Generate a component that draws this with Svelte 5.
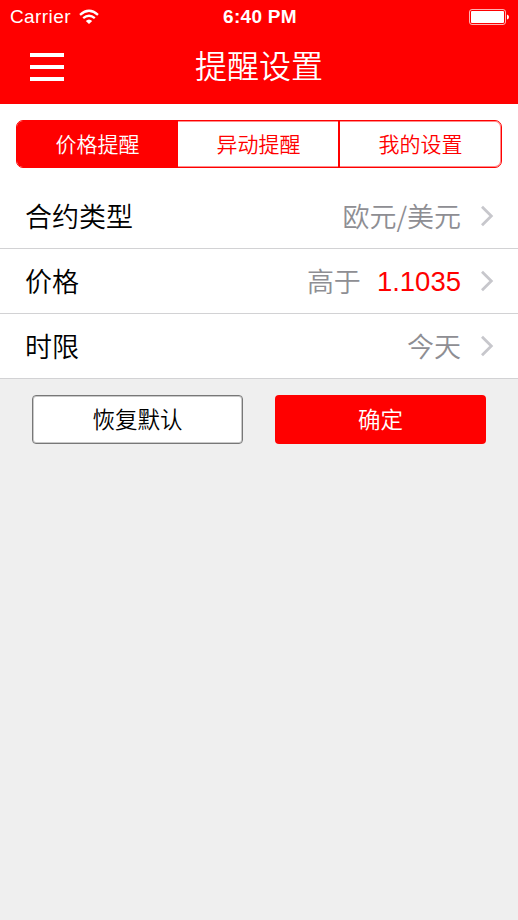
<script>
  const tabs = ['价格提醒', '异动提醒', '我的设置'];
  let active = $state(0);
  const rows = [
    { label: '合约类型', value: '欧元/美元' },
    { label: '价格', value: '高于', price: '1.1035' },
    { label: '时限', value: '今天' }
  ];
</script>

<div class="screen">
  <header>
    <div class="status">
      <div class="carrier">
        <span>Carrier</span>
        <svg width="20" height="16" viewBox="0 0 20 16" fill="none" stroke="#fff" stroke-width="2.3">
          <path d="M1 5.8Q10 -2.2 19 5.8" />
          <path d="M4.2 9.2Q10 4.2 15.8 9.2" />
          <path d="M6.8 12Q10 9 13.2 12L10 15Z" fill="#fff" stroke="none" />
        </svg>
      </div>
      <div class="time">6:40 PM</div>
      <div class="power">
        <svg width="41" height="16" viewBox="0 0 41 16">
          <rect x=".5" y=".5" width="36" height="15" rx="2.5" fill="none" stroke="#fff" stroke-opacity=".7" />
          <rect x="2" y="2" width="33" height="12" rx="1" fill="#fff" />
          <path d="M38 5.5Q40 6 40 8T38 10.5Z" fill="#fff" />
        </svg>
      </div>
    </div>
    <nav>
      <button class="menu" aria-label="菜单"><i></i><i></i><i></i></button>
      <h1>提醒设置</h1>
      <div></div>
    </nav>
  </header>

  <section class="content">
    <div class="tabs">
      {#each tabs as tab, i}
        <button class:active={active === i} onclick={() => (active = i)}>{tab}</button>
      {/each}
    </div>
    {#each rows as row}
      <div class="row">
        <span class="label">{row.label}</span>
        <span class="value">{row.value}</span>
        {#if row.price}<span class="price">{row.price}</span>{/if}
        <svg width="14" height="22" viewBox="0 0 14 22" fill="none" stroke="#c7c7cc" stroke-width="2.8">
          <path d="M2 1.7L11.3 11L2 20.3" />
        </svg>
      </div>
    {/each}
  </section>

  <div class="actions">
    <button class="reset">恢复默认</button>
    <button class="confirm">确定</button>
  </div>
</div>

<style>
  :global(body) {
    margin: 0;
  }
  .screen {
    width: 518px;
    height: 920px;
    overflow: hidden;
    background: #efefef;
    font-family: 'Liberation Sans', 'Noto Sans CJK SC', sans-serif;
    font-weight: 350;
  }
  button {
    margin: 0;
    padding: 0;
    border: 0;
    background: none;
    font: inherit;
    box-sizing: border-box;
  }
  header {
    height: 104px;
    background: #f00;
    color: #fff;
  }
  .status {
    height: 33px;
    padding: 0 8px 0 10px;
    display: grid;
    grid-template-columns: 1fr auto 1fr;
    align-items: center;
  }
  .carrier {
    display: flex;
    align-items: center;
    gap: 8px;
    font-size: 19px;
    letter-spacing: 0.4px;
  }
  .time {
    font-size: 19px;
    font-weight: 700;
    letter-spacing: 0.3px;
  }
  .power {
    display: flex;
    justify-content: flex-end;
  }
  nav {
    height: 67px;
    padding: 0 30px;
    display: grid;
    grid-template-columns: 1fr auto 1fr;
    align-items: center;
  }
  .menu {
    width: 34px;
    display: flex;
    flex-direction: column;
    gap: 8px;
  }
  .menu i {
    height: 4px;
    background: #fff;
  }
  h1 {
    margin: 0;
    font-size: 32px;
    line-height: 40px;
    font-weight: 350;
  }
  .content {
    background: #fff;
    padding-top: 16px;
  }
  .tabs {
    display: flex;
    height: 48px;
    margin: 0 16px 16px;
    box-sizing: border-box;
    border: 1px solid #f00;
    box-shadow: inset 0 0 0 1px rgba(255, 0, 0, 0.45);
    border-radius: 7px;
    overflow: hidden;
  }
  .tabs button {
    flex: 1;
    color: #f00;
    font-size: 21px;
    padding-bottom: 2px;
  }
  .tabs button:last-child {
    border-left: 2px solid #f00;
    margin-left: -1px;
  }
  .tabs button.active {
    background: #f00;
    color: #fff;
  }
  .row {
    height: 65px;
    box-sizing: border-box;
    border-bottom: 1px solid #d2d2d4;
    padding: 0 24px 0 25px;
    display: flex;
    align-items: center;
    font-size: 27px;
    line-height: 40px;
  }
  .label {
    flex: 1;
    color: #000;
  }
  .value {
    color: #8e8e93;
  }
  .label,
  .value {
    font-family: 'Noto Sans CJK SC', sans-serif;
    padding-bottom: 1px;
  }
  .price {
    margin-left: 16px;
    padding-top: 2px;
    color: #f00;
    font-size: 27.5px;
  }
  .row svg {
    margin-left: 19px;
  }
  .actions {
    display: flex;
    gap: 32px;
    padding: 16px 32px;
  }
  .actions button {
    width: 211px;
    height: 49px;
    border-radius: 4px;
    font-size: 22.5px;
    padding-bottom: 3px;
  }
  .actions .reset {
    background: #fff;
    border: 1px solid #777;
    box-shadow: inset 0 0 0 1px rgba(119, 119, 119, 0.4);
    color: #000;
  }
  .actions .confirm {
    background: #f00;
    color: #fff;
  }
</style>
